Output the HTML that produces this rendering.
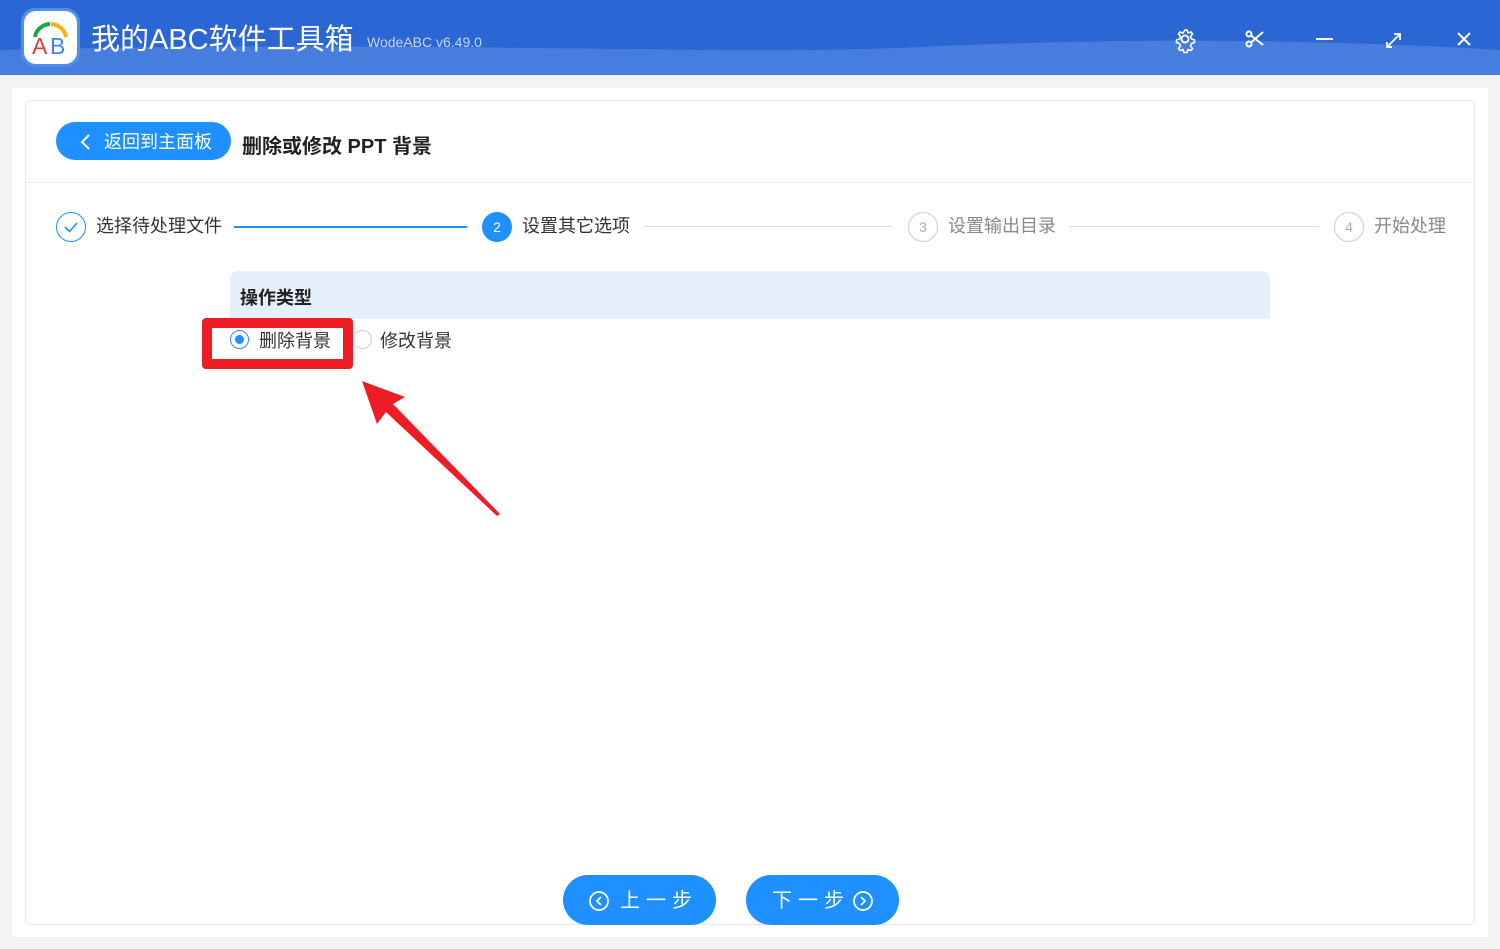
<!DOCTYPE html>
<html><head><meta charset="utf-8"><style>
*{margin:0;padding:0;box-sizing:border-box}
body{width:1500px;height:949px;background:#f3f3f3;font-family:"Liberation Sans","Noto Sans CJK SC",sans-serif;position:relative;overflow:hidden;color:#333}
.hdr{position:absolute;left:0;top:0;width:1500px;height:75px;background:#2a66d4;overflow:hidden}
.abs{position:absolute}
.panel{position:absolute;left:12px;top:88px;width:1476px;height:849px;background:#fff}
.card{position:absolute;left:25px;top:100px;width:1450px;height:825px;border:1px solid #e8e8e8;border-radius:6px;background:#fff}
.btn{position:absolute;background:#1e90ff;color:#fff;border-radius:20px}
.step{position:absolute;top:211px;font-size:18px;color:#333}
.circ{position:absolute;width:30px;height:30px;border-radius:50%;top:212px;text-align:center;line-height:28px;font-size:14px}
</style></head><body>
<div class="hdr">
<svg class="abs" style="left:0;top:0" width="1500" height="75"><path d="M0 50 C400 40 700 55 900 48 C1100 38 1300 38 1500 50 L1500 75 L0 75Z" fill="#477ddd"/></svg>
<div class="abs" style="left:21px;top:8px;width:59px;height:59px;border-radius:14px;background:#4d8ff0"></div>
<div class="abs" style="left:24px;top:11px;width:53px;height:53px;border-radius:12px;background:#fff"></div>
<svg class="abs" style="left:24px;top:11px" width="53" height="53"><path d="M11 26 A16 15 0 0 1 26 13" stroke="#1aa64a" stroke-width="4" fill="none"/><path d="M27 13 A16 15 0 0 1 42 26" stroke="#f5b400" stroke-width="4" fill="none"/><text x="8" y="43" font-size="23" font-family="Liberation Sans" fill="#e53935">A</text><text x="26" y="43" font-size="23" font-family="Liberation Sans" fill="#3b82f6">B</text></svg>
<div class="abs" style="left:91px;top:20px;font-size:29px;color:#fff;line-height:40px">我的ABC软件工具箱</div>
<div class="abs" style="left:367px;top:34px;font-size:14px;color:#c9d7f5">WodeABC v6.49.0</div>
<svg class="abs" style="left:1170px;top:24px" width="310" height="30" fill="none" stroke="#fff" stroke-width="2">
<circle cx="15" cy="15" r="3.5"/><path d="M15 6 l2 0 1 3 3 -1 1.5 2 -2 2.5 1 2.5 3 1 0 2.5 -3 1 -1 2.5 2 2.5 -1.5 2 -3 -1 -1 3 -3 0 -1 -3 -3 1 -1.5 -2 2 -2.5 -1 -2.5 -3 -1 0 -2.5 3 -1 1 -2.5 -2 -2.5 1.5 -2 3 1z" stroke-width="1.6"/>
<circle cx="79" cy="10" r="2.5"/><circle cx="79" cy="20" r="2.5"/><path d="M81 11.5 L93 21 M81 18.5 L93 8"/>
<path d="M146 15 H163"/>
<path d="M218 22 L229 11 M224 10 h6 v6 M217 18 v5 h5" stroke-width="1.8"/>
<path d="M288 9 L300 21 M300 9 L288 21"/>
</svg>
</div>
<div class="panel"></div>
<div class="card">
<div class="abs" style="left:0;top:81px;width:1448px;height:1px;background:#ebebeb"></div>
</div>
<div class="btn" style="left:56px;top:122px;width:175px;height:38px;font-size:18px;line-height:40px;padding-left:48px">返回到主面板</div>
<svg class="abs" style="left:78px;top:133px" width="14" height="18"><path d="M11 2 L4 9 L11 16" stroke="#fff" stroke-width="2" fill="none"/></svg>
<div class="abs" style="left:242px;top:130px;font-size:20px;font-weight:bold;color:#222">删除或修改 PPT 背景</div>

<div class="circ" style="left:56px;border:1px solid #1e90ff"></div>
<svg class="abs" style="left:56px;top:212px" width="30" height="30"><path d="M9 15 L13.5 19.5 L21 11" stroke="#1e90ff" stroke-width="1.6" fill="none"/></svg>
<div class="step" style="left:96px;line-height:30px">选择待处理文件</div>
<div class="abs" style="left:234px;top:226px;width:233px;height:2px;background:#1e90ff"></div>
<div class="circ" style="left:482px;background:#1e90ff;color:#fff;line-height:30px">2</div>
<div class="step" style="left:522px;line-height:30px">设置其它选项</div>
<div class="abs" style="left:643px;top:226px;width:250px;height:1px;background:#ddd"></div>
<div class="circ" style="left:908px;border:1px solid #ccc;color:#aaa">3</div>
<div class="step" style="left:948px;line-height:30px;color:#888">设置输出目录</div>
<div class="abs" style="left:1069px;top:226px;width:250px;height:1px;background:#ddd"></div>
<div class="circ" style="left:1334px;border:1px solid #ccc;color:#aaa">4</div>
<div class="step" style="left:1374px;line-height:30px;color:#888">开始处理</div>

<div class="abs" style="left:230px;top:271px;width:1040px;height:48px;background:#e8effc;border-radius:8px 8px 0 0"></div>
<div class="abs" style="left:240px;top:284px;font-size:18px;font-weight:bold;color:#222">操作类型</div>
<div class="abs" style="left:202px;top:318px;width:151px;height:51px;border:10px solid #ee1c25;border-radius:4px"></div>
<div class="abs" style="left:230px;top:330px;width:19px;height:19px;border:1px solid #1e90ff;border-radius:50%"></div>
<div class="abs" style="left:235px;top:335px;width:9px;height:9px;background:#1e90ff;border-radius:50%"></div>
<div class="abs" style="left:259px;top:327px;font-size:18px">删除背景</div>
<div class="abs" style="left:353px;top:330px;width:19px;height:19px;border:1px solid #ccc;border-left-color:transparent;border-radius:50%"></div>
<div class="abs" style="left:380px;top:327px;font-size:18px">修改背景</div>
<svg class="abs" style="left:0;top:0" width="600" height="600"><polygon points="362,381 405,397 393,404 500,514 497,516 386,412 377,424" fill="#ee1c25"/></svg>

<div class="btn" style="left:563px;top:875px;width:153px;height:50px;border-radius:25px;font-size:20px;line-height:52px;padding-left:57px;letter-spacing:6px">上一步</div>
<svg class="abs" style="left:588px;top:890px" width="22" height="22"><circle cx="11" cy="11" r="9" stroke="#fff" stroke-width="1.8" fill="none"/><path d="M13 7 L9 11 L13 15" stroke="#fff" stroke-width="1.8" fill="none"/></svg>
<div class="btn" style="left:746px;top:875px;width:153px;height:50px;border-radius:25px;font-size:20px;line-height:52px;padding-left:26px;letter-spacing:6px">下一步</div>
<svg class="abs" style="left:852px;top:890px" width="22" height="22"><circle cx="11" cy="11" r="9" stroke="#fff" stroke-width="1.8" fill="none"/><path d="M9 7 L13 11 L9 15" stroke="#fff" stroke-width="1.8" fill="none"/></svg>
</body></html>
